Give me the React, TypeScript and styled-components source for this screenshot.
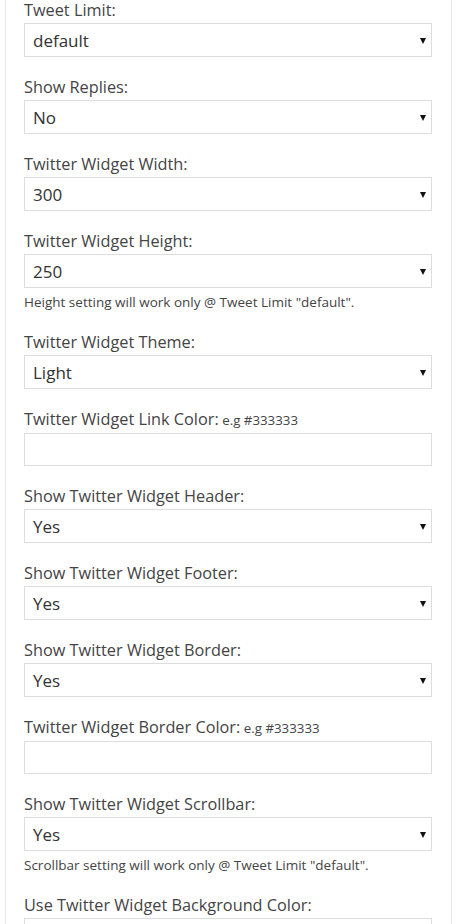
import React from "react";
import styled, { createGlobalStyle } from "styled-components";

const Global = createGlobalStyle`
  html, body { margin: 0; padding: 0; background: #fff; }
  body { font-family: "Open Sans", "Noto Sans", sans-serif; }
  * { box-sizing: border-box; }
`;

const Page = styled.div`
  padding: 0 5px;
  width: 457px;
`;

const Panel = styled.div`
  border-left: 1px solid #e6e6e6;
  border-right: 1px solid #e6e6e6;
  padding: 0 19px 40px 18px;
  background: #fff;
`;

const Field = styled.div`
  display: flex;
  flex-direction: column;
  margin-bottom: 20px;
`;

const Label = styled.label`
  font-size: 16.3px;
  line-height: 20px;
  color: #444;
  margin-bottom: 3px;
  white-space: nowrap;
`;

const Hint = styled.span`
  font-size: 13.3px;
  color: #444;
`;

const Box = styled.div<{ $h: number }>`
  position: relative;
  height: ${(p) => p.$h}px;
  border: 1px solid #ddd;
  background: #fff;
  display: flex;
  align-items: center;
  padding: 0 8px;
  font-size: 17px;
  color: #333;
`;

const Arrow = styled.span`
  position: absolute;
  right: 5px;
  top: 50%;
  margin-top: -2px;
  width: 0;
  height: 0;
  border-left: 3.5px solid transparent;
  border-right: 3.5px solid transparent;
  border-top: 6px solid #111;
`;

const Help = styled.div`
  font-size: 13.5px;
  line-height: 17px;
  color: #444;
  margin-top: 6px;
  margin-bottom: 1px;
  white-space: nowrap;
`;

type Item = { label: string; hint?: string; value?: string; help?: string };

const items: Item[] = [
  { label: "Tweet Limit:", value: "default" },
  { label: "Show Replies:", value: "No" },
  { label: "Twitter Widget Width:", value: "300" },
  { label: "Twitter Widget Height:", value: "250", help: 'Height setting will work only @ Tweet Limit "default".' },
  { label: "Twitter Widget Theme:", value: "Light" },
  { label: "Twitter Widget Link Color:", hint: "e.g #333333" },
  { label: "Show Twitter Widget Header:", value: "Yes" },
  { label: "Show Twitter Widget Footer:", value: "Yes" },
  { label: "Show Twitter Widget Border:", value: "Yes" },
  { label: "Twitter Widget Border Color:", hint: "e.g #333333" },
  { label: "Show Twitter Widget Scrollbar:", value: "Yes", help: 'Scrollbar setting will work only @ Tweet Limit "default".' },
  { label: "Use Twitter Widget Background Color:", value: "No" },
];

export default function App() {
  return (
    <Page>
      <Global />
      <Panel>
        {items.map((it) => (
          <Field key={it.label}>
            <Label>
              {it.label}
              {it.hint && <Hint> {it.hint}</Hint>}
            </Label>
            {it.value !== undefined ? (
              <Box $h={34}>
                {it.value}
                <Arrow />
              </Box>
            ) : (
              <Box $h={33} />
            )}
            {it.help && <Help>{it.help}</Help>}
          </Field>
        ))}
      </Panel>
    </Page>
  );
}
